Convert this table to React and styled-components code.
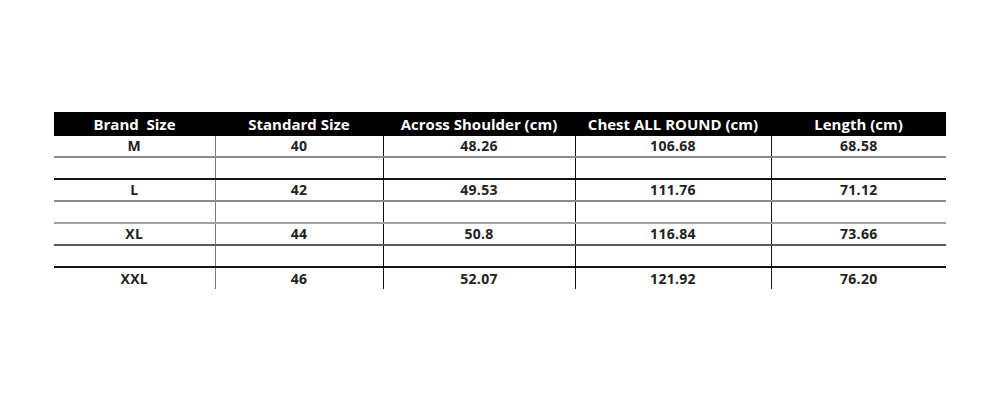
import styled, { createGlobalStyle } from "styled-components";

const GlobalStyle = createGlobalStyle`
  html, body {
    margin: 0;
    padding: 0;
    background: #fff;
  }
`;

const Page = styled.div`
  width: 1000px;
  height: 400px;
  padding: 112px 0 0 54px;
  box-sizing: border-box;
  font-family: "Open Sans", "Liberation Sans", sans-serif;
`;

const Table = styled.table`
  width: 892px;
  border-collapse: collapse;
  table-layout: fixed;
`;

const HeadCell = styled.th`
  height: 24px;
  padding: 0;
  background: #000;
  color: #fff;
  font-size: 15px;
  font-weight: 700;
  line-height: 24px;
  text-align: center;
  white-space: pre;
`;

const Cell = styled.td`
  height: ${(p) => p.$h || 20}px;
  padding: 0;
  color: #222;
  font-size: 14px;
  letter-spacing: 0.3px;
  line-height: 18px;
  font-weight: 700;
  text-align: center;
  border-bottom: ${(p) => (p.$line ? `2px solid ${p.$line}` : "none")};
  border-left: ${(p) => (p.$first ? "none" : p.$vline ? `1.5px solid ${p.$vline}` : "1.5px solid #111")};
`;

const columns = [
  { title: "Brand  Size", width: 161 },
  { title: "Standard Size", width: 168 },
  { title: "Across Shoulder (cm)", width: 192 },
  { title: "Chest ALL ROUND (cm)", width: 196 },
  { title: "Length (cm)", width: 175 },
];

const rows = [
  { values: ["M", "40", "48.26", "106.68", "68.58"], line: "#8c8c8c" },
  { values: [], line: "#151515" },
  { values: ["L", "42", "49.53", "111.76", "71.12"], line: "#8c8c8c" },
  { values: [], line: "#a3a3a3" },
  { values: ["XL", "44", "50.8", "116.84", "73.66"], line: "#5a5a5a" },
  { values: [], line: "#151515" },
  { values: ["XXL", "46", "52.07", "121.92", "76.20"], line: null },
];

export default function App() {
  return (
    <>
      <GlobalStyle />
      <Page>
        <Table>
          <colgroup>
            {columns.map((c) => (
              <col key={c.title} style={{ width: c.width }} />
            ))}
          </colgroup>
          <thead>
            <tr>
              {columns.map((c) => (
                <HeadCell key={c.title}>{c.title}</HeadCell>
              ))}
            </tr>
          </thead>
          <tbody>
            {rows.map((r, i) => (
              <tr key={i}>
                {columns.map((c, j) => (
                  <Cell
                    key={c.title}
                    $first={j === 0}
                    $vline={j === 1 ? "#7a7a7a" : null}
                    $line={r.line}
                    $h={i === 6 ? 21 : 20}
                  >
                    {r.values[j] || ""}
                  </Cell>
                ))}
              </tr>
            ))}
          </tbody>
        </Table>
      </Page>
    </>
  );
}
